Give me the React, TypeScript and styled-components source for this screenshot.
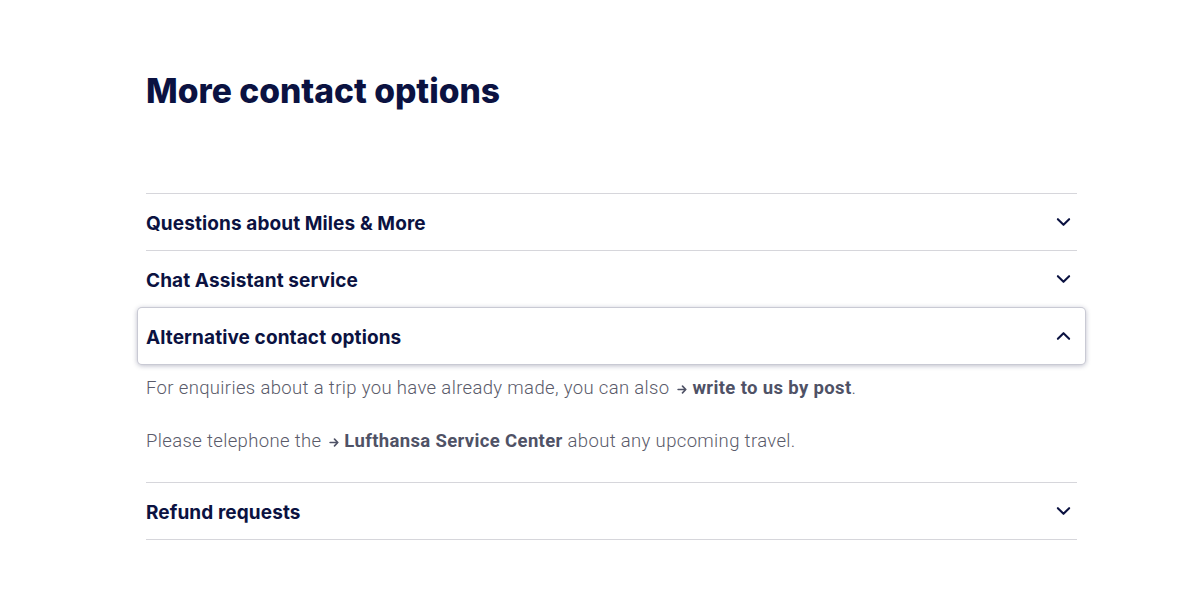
import React, { useState } from 'react';
import styled, { createGlobalStyle } from 'styled-components';

const GlobalStyle = createGlobalStyle`
  html, body {
    margin: 0;
    padding: 0;
    background: #fff;
  }
  body {
    font-family: Inter, "Noto Sans", sans-serif;
    -webkit-font-smoothing: antialiased;
  }
`;

type Item = {
  title: string;
  body?: React.ReactNode;
};

function getItems(): Item[] {
  return [
    { title: 'Questions about Miles & More' },
    { title: 'Chat Assistant service' },
    {
      title: 'Alternative contact options',
      body: (
        <>
          <Para>
            For enquiries about a trip you have already made, you can also{' '}
            <TextLink href="#">
              <Arrow />
              write to us by post
            </TextLink>
            .
          </Para>
          <Para>
            Please telephone the{' '}
            <TextLink href="#">
              <Arrow />
              Lufthansa Service Center
            </TextLink>{' '}
            about any upcoming travel.
          </Para>
        </>
      ),
    },
    { title: 'Refund requests' },
  ];
}

function Arrow() {
  return (
    <ArrowIcon viewBox="0 0 10 10" aria-hidden="true">
      <path d="M1 5h7M5 2l3 3-3 3" fill="none" stroke="currentColor" strokeWidth="1.5" strokeLinecap="round" strokeLinejoin="round" />
    </ArrowIcon>
  );
}

function Chevron({ up }: { up: boolean }) {
  return (
    <ChevronIcon viewBox="0 0 16 10" aria-hidden="true">
      <path
        d={up ? 'M2 8l6-6 6 6' : 'M2 2l6 6 6-6'}
        fill="none"
        stroke="currentColor"
        strokeWidth="2.2"
        strokeLinecap="round"
        strokeLinejoin="round"
      />
    </ChevronIcon>
  );
}

export default function App() {
  const [open, setOpen] = useState<number | null>(2);
  const items = getItems();

  return (
    <>
      <GlobalStyle />
      <Page>
        <Heading>More contact options</Heading>
        <Accordion>
          {items.map((item, i) => {
            const isOpen = open === i;
            return (
              <Section key={item.title} $noBorder={open === i + 1}>
                <Trigger $focused={isOpen} onClick={() => setOpen(isOpen ? null : i)}>
                  <TriggerLabel>{item.title}</TriggerLabel>
                  <Chevron up={isOpen} />
                </Trigger>
                {isOpen && item.body && <Panel>{item.body}</Panel>}
              </Section>
            );
          })}
        </Accordion>
      </Page>
    </>
  );
}

const Page = styled.main`
  width: 931px;
  margin-left: 146px;
  padding-top: 71px;
`;

const Heading = styled.h1`
  margin: 0 0 82px;
  font-family: Inter, "Noto Sans", sans-serif;
  font-size: 33.6px;
  line-height: 40px;
  font-weight: 800;
  letter-spacing: 0;
  color: #0b1241;
`;

const Accordion = styled.div`
  border-top: 1px solid #d6d6db;
`;

const Section = styled.div<{ $noBorder: boolean }>`
  border-bottom: 1px solid ${(p) => (p.$noBorder ? 'transparent' : '#d6d6db')};
`;

const Trigger = styled.button<{ $focused: boolean }>`
  display: flex;
  align-items: center;
  justify-content: space-between;
  width: ${(p) => (p.$focused ? 'calc(100% + 16px)' : '100%')};
  height: 56px;
  margin: ${(p) => (p.$focused ? '0 -8px' : '0')};
  padding: ${(p) => (p.$focused ? '0 14px 0 8px' : '0 6px 0 0')};
  background: #fff;
  border: none;
  border-radius: 4px;
  cursor: pointer;
  color: #0b1241;
  text-align: left;
  box-shadow: ${(p) =>
    p.$focused ? '0 0 0 1px #c9cad4, 0 1px 5px 1px rgba(20, 24, 70, 0.28)' : 'none'};
  position: relative;
`;

const TriggerLabel = styled.span`
  font-family: Inter, "Noto Sans", sans-serif;
  font-size: 19px;
  font-weight: 700;
  letter-spacing: 0.1px;
  color: #0b1241;
  transform: translateY(1px);
`;

const ChevronIcon = styled.svg`
  width: 15px;
  height: 10px;
  color: #0b1241;
`;

const Panel = styled.div`
  padding: 12px 0 29px;
`;

const Para = styled.p`
  margin: 0 0 29px;
  font-family: Roboto, "Noto Sans", sans-serif;
  font-size: 18.5px;
  line-height: 24px;
  font-weight: 300;
  letter-spacing: 0.35px;
  color: #5a5b6a;

  &:last-child {
    margin-bottom: 0;
  }
`;

const TextLink = styled.a`
  font-weight: 700;
  color: #4f5266;
  text-decoration: none;
  white-space: nowrap;
`;

const ArrowIcon = styled.svg`
  width: 11px;
  height: 11px;
  margin: 0 4px 0 3px;
  vertical-align: -0.5px;
`;
